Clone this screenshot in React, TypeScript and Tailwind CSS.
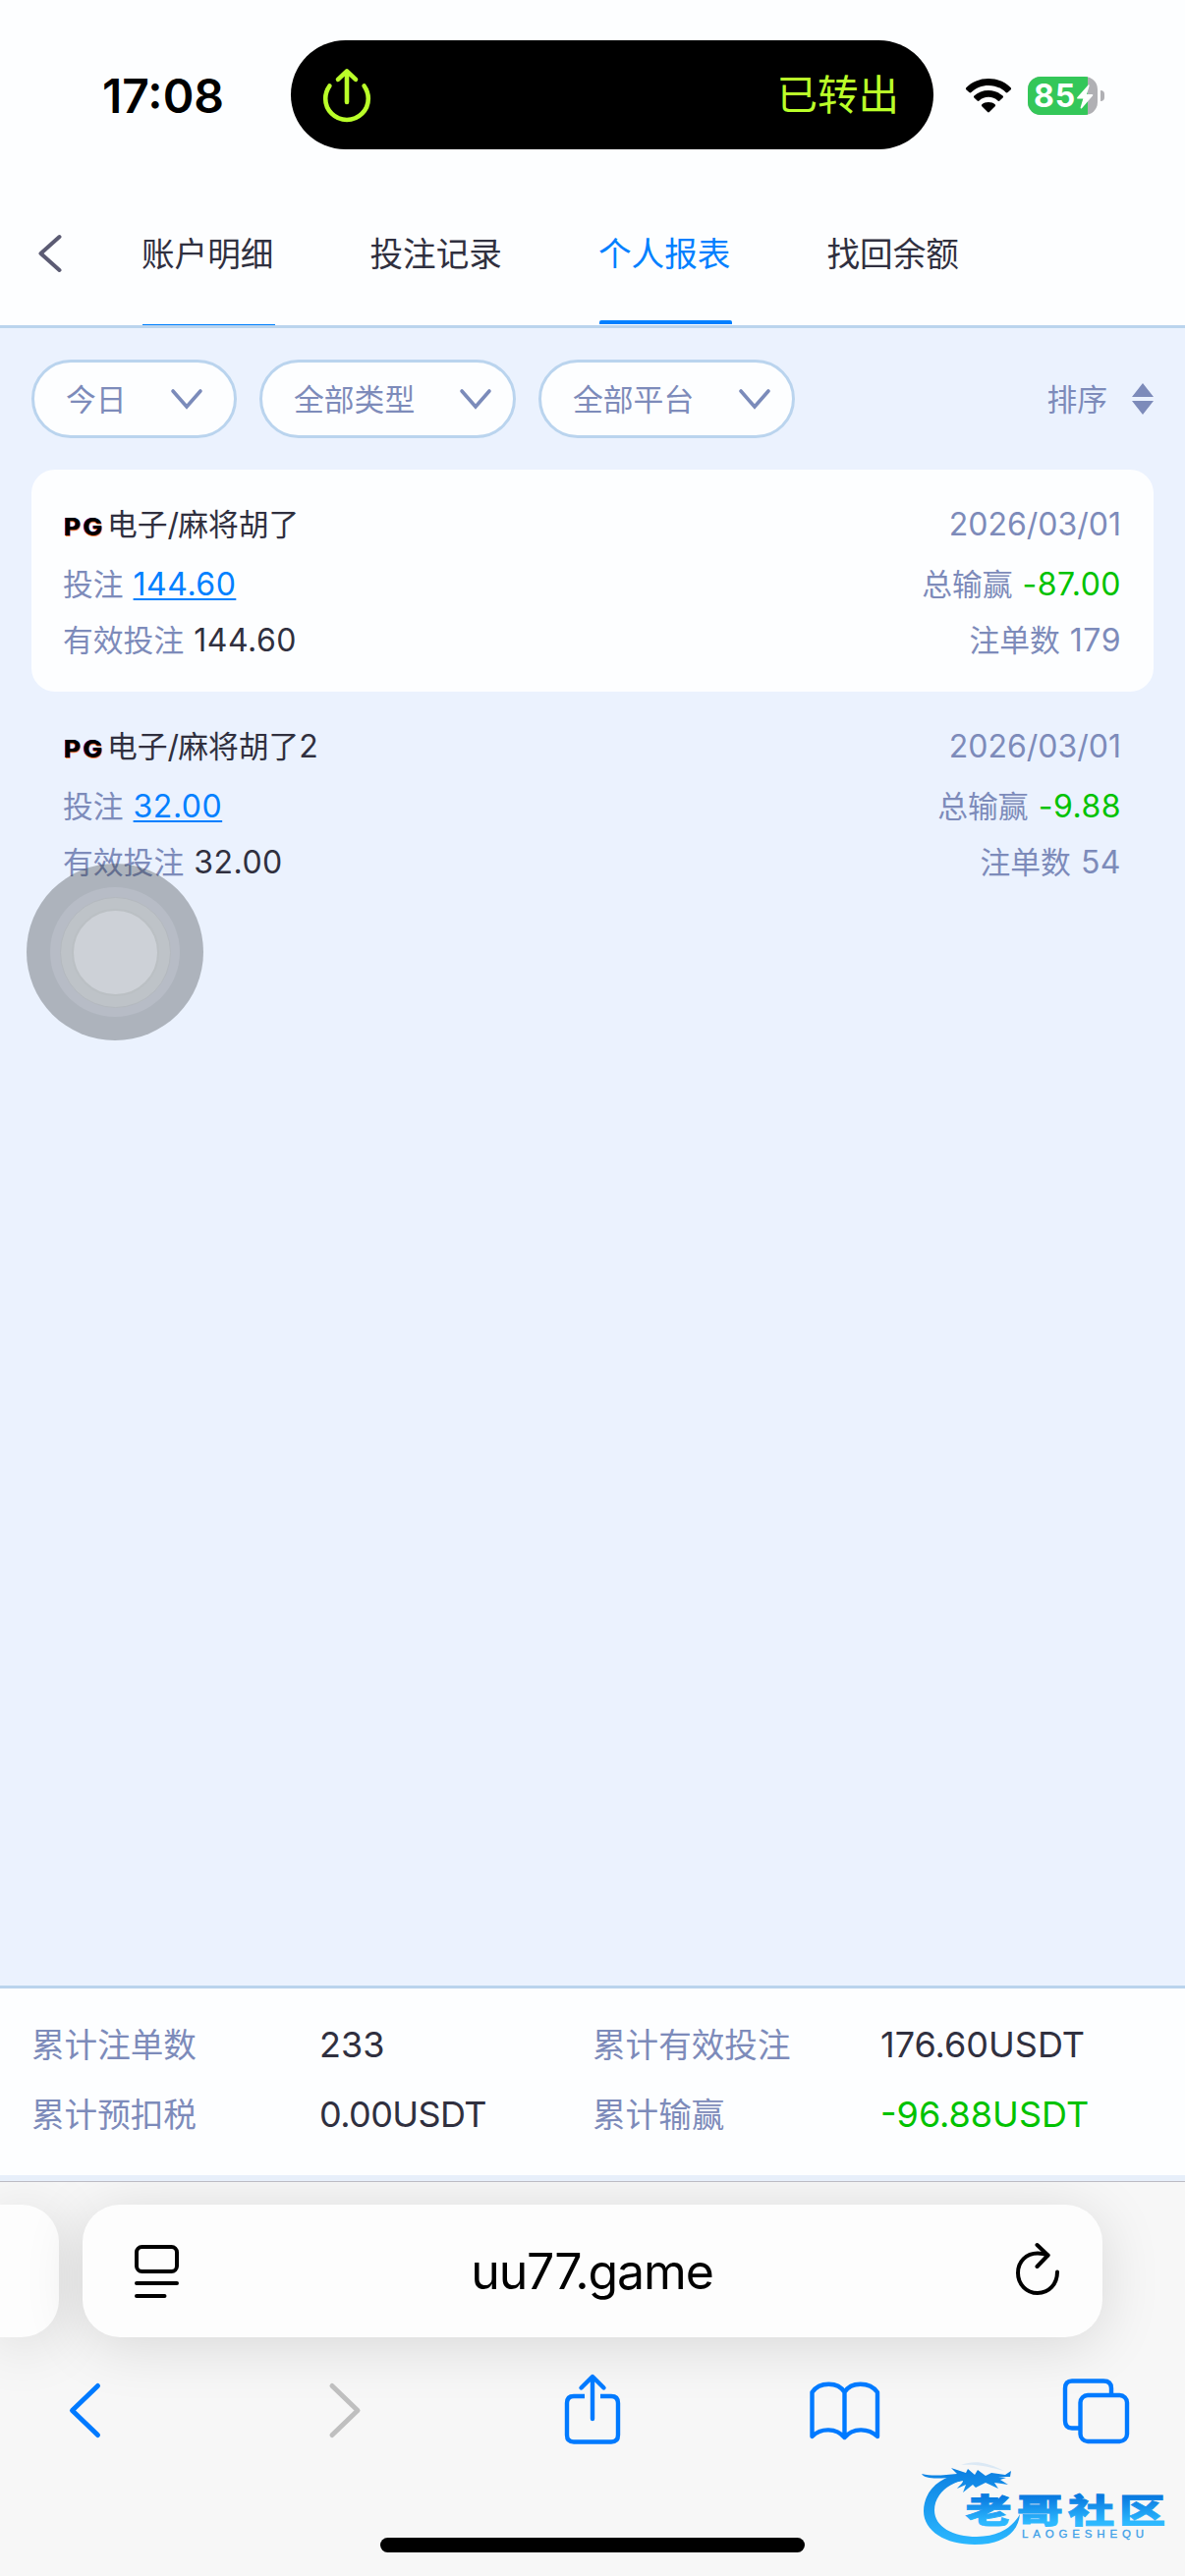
import { useState } from "react";
import clsx from "clsx";

interface BetRecord {
  name: string;
  suffix?: string;
  date: string;
  bet: string;
  validBet: string;
  profit: string;
  count: number;
}

const tabs = ["账户明细", "投注记录", "个人报表", "找回余额"];

const records: BetRecord[] = [
  { name: "麻将胡了", date: "2026/03/01", bet: "144.60", validBet: "144.60", profit: "-87.00", count: 179 },
  { name: "麻将胡了", suffix: "2", date: "2026/03/01", bet: "32.00", validBet: "32.00", profit: "-9.88", count: 54 },
];

const summary = [
  { label: "累计注单数", value: "233", style: "text-[#30303f]" },
  { label: "累计有效投注", value: "176.60USDT", style: "text-[#30303f]" },
  { label: "累计预扣税", value: "0.00USDT", style: "text-[#30303f] tracking-[-0.6px]" },
  { label: "累计输赢", value: "-96.88USDT", style: "text-[#00c200]" },
];

const StatusBar = () => (
  <div className="flex h-[180px] items-start bg-[#fdfeff]">
    <div className="mt-[69px] w-[192px] ml-[104px] text-[48px] leading-[58px] font-semibold text-black">
      17:08
    </div>
    <div className="mt-[41px] flex h-[111px] w-[654px] items-center justify-between rounded-full bg-black pl-[32px] pr-[35px]">
      <svg width="50" height="58" viewBox="0 0 50 58" fill="none" stroke="#baff29" strokeWidth="4.6" strokeLinecap="round" strokeLinejoin="round">
        <path d="M7.4 19.5C4.6 23.5 3.2 27.5 3.2 32.3C3.2 44.5 13 54 25 54C37 54 46.8 44.5 46.8 32.3C46.8 27.5 45.4 23.5 42.6 19.5" />
        <path d="M25 36V4.5M16 12.8L25 4.3L34 12.8" />
      </svg>
      <span className="text-[41.5px] leading-[56px] text-[#baff29]">已转出</span>
    </div>
    <div className="flex pl-[32px] pt-[78px]">
      <svg width="48" height="38" viewBox="0 0 48 38" fill="black">
        <path d="M24 2C33 2 41 5.4 46.7 11.2Q47.5 12.2 46.7 13.2L43.6 16Q42.6 16.8 41.6 15.9C36.8 11.3 30.7 8.9 24 8.9S11.2 11.3 6.4 15.9Q5.4 16.8 4.4 16L1.3 13.2Q0.5 12.2 1.3 11.2C7 5.4 15 2 24 2Z" />
        <path d="M24 14.1C29.7 14.1 34.8 16.1 38.6 19.6Q39.4 20.5 38.6 21.5L35.4 24.5Q34.5 25.3 33.5 24.4C30.9 22.1 27.7 20.8 24 20.8S17.1 22.1 14.5 24.4Q13.5 25.3 12.6 24.5L9.4 21.5Q8.6 20.5 9.4 19.6C13.2 16.1 18.3 14.1 24 14.1Z" />
        <path d="M24 26C26.8 26 29 26.9 30.7 28.3Q31.6 29.2 30.7 30.2L24.9 36Q24 36.9 23.1 36L17.3 30.2Q16.4 29.2 17.3 28.3C19 26.9 21.2 26 24 26Z" />
      </svg>
      <div className="relative ml-[16px] flex h-[39px] w-[71px] overflow-hidden rounded-[13px] bg-[#b0b0b4]">
        <div className="h-full w-[61px] bg-[#34c759] pl-[6px] text-[32px] leading-[39px] font-bold tracking-[1px] text-white">
          85
        </div>
        <svg className="absolute left-[49px] top-[8px]" width="19" height="25" viewBox="0 0 19 25" fill="white">
          <path d="M12.5 0.5L1.2 13.2Q0.6 14.4 1.9 14.5H7.3L4.6 23.6Q4.7 25 6 24.2L17.2 11.2Q17.7 10 16.5 9.9H11.1L13.6 1.3Q13.7 0 12.5 0.5Z" />
        </svg>
      </div>
      <div className="ml-[3px] mt-[14px] h-[11px] w-[4px] rounded-r-full bg-[#b0b0b4]" />
    </div>
  </div>
);

const DownArrow = () => (
  <svg width="34" height="22" viewBox="0 0 34 22" fill="none" stroke="#7b8bba" strokeWidth="3.6" strokeLinecap="round">
    <path d="M3 3L17 19L31 3" />
  </svg>
);

const Label = ({ children }: { children: React.ReactNode }) => (
  <span className="mr-[10px] text-[30.8px] tracking-normal text-[#7d8bba]">{children}</span>
);

const RecordCard = ({ record, active }: { record: BetRecord; active: boolean }) => (
  <div
    className={clsx(
      "flex h-[226px] justify-between rounded-[24px] pl-8 pr-[33px] pt-[25px] text-[32px] whitespace-nowrap",
      active ? "bg-[#fdfeff]" : "bg-transparent"
    )}
  >
    <div className="tracking-[0.5px]">
      <div className="flex h-[61px] items-baseline leading-[62px] tracking-normal text-[#30303f]">
        <span className="w-[45px] pl-px">
          <span className="inline-block origin-left scale-x-110 text-[24px] font-extrabold tracking-[2px] text-black [text-shadow:0.5px_0.5px_0_#ff7a3c,-0.5px_0_0_#7a3cff]">
            PG
          </span>
        </span>
        <span className="text-[30.8px]">电子</span>
        <span className="-mr-px">/</span>
        <span className="text-[30.8px]">{record.name}</span>
        {record.suffix && <span>{record.suffix}</span>}
      </div>
      <div className="h-[59px] leading-[61px]">
        <Label>投注</Label>
        <span className="text-[#0080ff] underline decoration-2 underline-offset-[3px] [text-decoration-skip-ink:none]">
          {record.bet}
        </span>
      </div>
      <div className="leading-[57px] text-[#30303f]">
        <Label>有效投注</Label>
        {record.validBet}
      </div>
    </div>
    <div className="text-right tracking-[0.5px] text-[#7d8bba]">
      <div className="h-[61px] leading-[62px] tracking-normal">{record.date}</div>
      <div className="h-[59px] leading-[61px] text-[#00c200]">
        <Label>总输赢</Label>
        {record.profit}
      </div>
      <div className="leading-[57px]">
        <Label>注单数</Label>
        {record.count}
      </div>
    </div>
  </div>
);

const AssistiveTouch = () => (
  <div className="absolute left-[27px] top-[879px] flex size-[180px] items-center justify-center rounded-full bg-[rgba(53,58,63,0.34)]">
    <div className="flex size-[132px] items-center justify-center rounded-full bg-[#b7bcc6]">
      <div className="flex size-[113px] items-center justify-center rounded-full border border-[#b4b9bf] bg-[#bec3c8]">
        <div className="size-[89px] rounded-full border-2 border-[#bbc0c4] bg-[#cdd1d7]" />
      </div>
    </div>
  </div>
);

const CommunityLogo = () => (
  <svg className="absolute left-[930px] top-[2496px]" width="266" height="104" viewBox="0 0 266 104">
    <defs>
      <linearGradient id="ring" gradientUnits="userSpaceOnUse" x1="0" y1="14" x2="0" y2="94">
        <stop offset="0" stopColor="#0b7de0" />
        <stop offset="1" stopColor="#2bb8ff" />
      </linearGradient>
      <linearGradient id="word" gradientUnits="userSpaceOnUse" x1="0" y1="-28" x2="0" y2="3">
        <stop offset="0.1" stopColor="#0a7be0" />
        <stop offset="0.9" stopColor="#2db9ff" />
      </linearGradient>
    </defs>
    <g fill="url(#ring)">
      <path d="M50 22C26 24 10 40 10 60C10 80 32 94 62 94C88 94 106 84 108 63C100 77 86 86 64 86C40 86 21 76 21 59C21 45 32 34 48 29Z" />
      <path d="M8 22C11 27 22 27 34 26L41 27L36 32L50 29C50 32 46 34 44 37L53 33L50 41L60 33L63 36L73 31L86 37L82 31L96 33L88 28L94 26L86 25L98 25L99 19L93 23L79 21L73 24L65 18L62 23L55 17L53 21L38 16L44 22C32 23 20 25 8 22Z" />
      <path d="M48 13C62 8 74 10 92 19C74 14 62 12 48 13Z" opacity="0.12" />
    </g>
    <g transform="translate(52.5 71.8) scale(1.45 1.04)">
      <text x="0" y="0" fill="url(#word)" stroke="url(#word)" strokeWidth="0.8" fontFamily="'Noto Sans CJK SC', sans-serif" fontWeight="900" fontSize="32.5" letterSpacing="3.5">
        老哥社区
      </text>
    </g>
    <text x="110" y="87" fill="#3d9fe8" stroke="#3d9fe8" strokeWidth="0.3" fontFamily="'Liberation Sans', sans-serif" fontSize="11.5" textLength="124" lengthAdjust="spacing">
      LAOGESHEQU
    </text>
  </svg>
);

const BrowserBar = () => (
  <div className="flex h-[401px] flex-col overflow-hidden bg-[#f7f7f7] pt-[23px]">
    <div className="flex h-[135px]">
      <div className="w-[60px] rounded-r-[38px] bg-[#fdfdfd] shadow-[0_8px_60px_rgba(0,0,0,0.13)]" />
      <div className="ml-6 flex w-[1038px] items-center justify-between rounded-[38px] bg-[#fdfdfd] pl-[51px] pr-[43px] shadow-[0_8px_60px_rgba(0,0,0,0.13)]">
        <svg width="50" height="60" viewBox="0 0 50 60" fill="none" stroke="black" strokeWidth="4" strokeLinecap="round">
          <rect x="4" y="5" width="41" height="25" rx="5.5" />
          <path d="M4 42H45M4 55H32.5" />
        </svg>
        <span className="-ml-[11px] text-[50px] leading-[60px] tracking-[-1.1px] text-black">uu77.game</span>
        <svg className="-mt-[4px]" width="48" height="60" viewBox="0 0 48 60" fill="none" stroke="black" strokeWidth="4" strokeLinecap="round" strokeLinejoin="round">
          <path d="M35.5 15.5C32 14 29 13.5 25 13.5C13.5 13.5 5 22 5 33.5C5 45 13.5 54 25 54C36.5 54 45 45 45 32.5" />
          <path d="M24.5 5L35.5 15.5L24.5 27" />
        </svg>
      </div>
    </div>
    <div className="mt-[31px] flex h-[88px] items-center justify-between pl-[48px] pr-[52px]">
      <svg width="76" height="88" viewBox="0 0 76 88" fill="none" stroke="#007aff" strokeWidth="5" strokeLinecap="round" strokeLinejoin="round">
        <path d="M51.5 18.5L25.5 43.5L51.5 68.5" />
      </svg>
      <svg width="76" height="88" viewBox="0 0 76 88" fill="none" stroke="#bfbfbf" strokeWidth="5" strokeLinecap="round" strokeLinejoin="round">
        <path d="M32 18.5L58 43.5L32 68.5" />
      </svg>
      <svg width="76" height="88" viewBox="0 0 76 88" fill="none" stroke="#007aff" strokeWidth="4.4" strokeLinecap="round" strokeLinejoin="round">
        <path d="M32 29H21Q14 29 14 36V68.5Q14 75.5 21 75.5H59Q66 75.5 66 68.5V36Q66 29 59 29H48" strokeLinecap="butt" />
        <path d="M40 52V10M28.5 20.5L40 9L51.5 20.5" />
      </svg>
      <svg width="76" height="88" viewBox="0 0 76 88" fill="none" stroke="#007aff" strokeWidth="4.4" strokeLinecap="round" strokeLinejoin="round">
        <path d="M38.5 71C30 61 14.5 61 5.5 70V25C13 14 32 14 38.5 25C45 14 64 14 72 25V70C62.5 61 47 61 38.5 71V25" />
      </svg>
      <svg width="76" height="88" viewBox="0 0 76 88" fill="none" stroke="#007aff" strokeWidth="4.4">
        <path d="M20 61.5H13Q6 61.5 6 54V21Q6 13.5 13 13.5H45Q53 13.5 53 21V26" />
        <rect x="21.5" y="28" width="47.5" height="47" rx="7.5" />
      </svg>
    </div>
    <div className="mx-auto mt-[85px] h-[15px] w-[432px] rounded-full bg-black" />
  </div>
);

const App = () => {
  const [activeTab, setActiveTab] = useState(2);

  return (
    <div className="relative flex h-[2622px] w-[1206px] flex-col overflow-hidden bg-[#ebf2fe] font-['Inter','Noto_Sans_CJK_SC',sans-serif]">
      <StatusBar />

      {/* Tabs */}
      <div className="flex h-[154px] border-b-[3px] border-[#bad4ed] bg-[#fdfeff] pl-[39px]">
        <svg className="mt-[58px]" width="26" height="40" viewBox="0 0 26 40" fill="none" stroke="#5b5b73" strokeWidth="4" strokeLinecap="round" strokeLinejoin="round">
          <path d="M21.5 3L2.5 20L21.5 37" />
        </svg>
        <div className="ml-[79px] flex gap-[98px]">
          {tabs.map((tab, index) => (
            <button
              key={tab}
              onClick={() => setActiveTab(index)}
              className={clsx(
                "flex w-[134.5px] flex-col justify-between text-left text-[33.6px] leading-[158px] whitespace-nowrap",
                index === activeTab ? "text-[#0080ff]" : "text-[#30303f]"
              )}
            >
              <span className="h-[146px]">{tab}</span>
              {index === activeTab && <span className="ml-[1px] mb-px h-[4px] w-full rounded-t-[2px] bg-[#0080ff]" />}
              {index === 0 && activeTab !== 0 && <span className="ml-[1px] h-px w-full bg-[#0080ff]" />}
            </button>
          ))}
        </div>
      </div>

      {/* Filters */}
      <div className="flex items-center px-8 pt-8 text-[30.8px] leading-[74px] text-[#7d8bba]">
        <div className="flex h-[80px] w-[209px] items-center justify-between rounded-full border-[3px] border-[#bad4ee] bg-[#fdfeff] pl-[32px] pr-[31px]">
          <span className="pt-[2px]">今日</span>
          <DownArrow />
        </div>
        <div className="ml-[23px] flex h-[80px] w-[261px] items-center justify-between rounded-full border-[3px] border-[#bad4ee] bg-[#fdfeff] pl-[32px] pr-[21px]">
          <span className="pt-[2px]">全部类型</span>
          <DownArrow />
        </div>
        <div className="ml-[23px] flex h-[80px] w-[261px] items-center justify-between rounded-full border-[3px] border-[#bad4ee] bg-[#fdfeff] pl-[32px] pr-[21px]">
          <span className="pt-[2px]">全部平台</span>
          <DownArrow />
        </div>
        <span className="ml-auto pt-[2px]">排序</span>
        <svg className="ml-[25px]" width="22" height="32" viewBox="0 0 22 32" fill="#7d8bba">
          <path d="M11 0L22 14H0ZM11 32L22 18H0Z" />
        </svg>
      </div>

      {/* Records */}
      <div className="flex-1 px-8 pt-8">
        {records.map((record, index) => (
          <RecordCard key={index} record={record} active={index === 0} />
        ))}
      </div>

      {/* Summary */}
      <div className="h-[199px] border-t-[3px] border-b-[6px] border-t-[#bad4ed] border-b-[#e7effa] bg-[#fdfeff] pl-[32px] pt-[22px]">
        <div className="grid grid-cols-[293px_278px_293px_1fr] text-[36px] leading-[71px] whitespace-nowrap">
          {summary.map((item) => (
            <div key={item.label} className="contents">
              <span className="text-[33.6px] text-[#7d8bba]">{item.label}</span>
              <span className={item.style}>{item.value}</span>
            </div>
          ))}
        </div>
      </div>
      <div className="h-px shrink-0 bg-[#bcbbc4]" />

      <BrowserBar />
      <AssistiveTouch />
      <CommunityLogo />
    </div>
  );
};

export default App;
